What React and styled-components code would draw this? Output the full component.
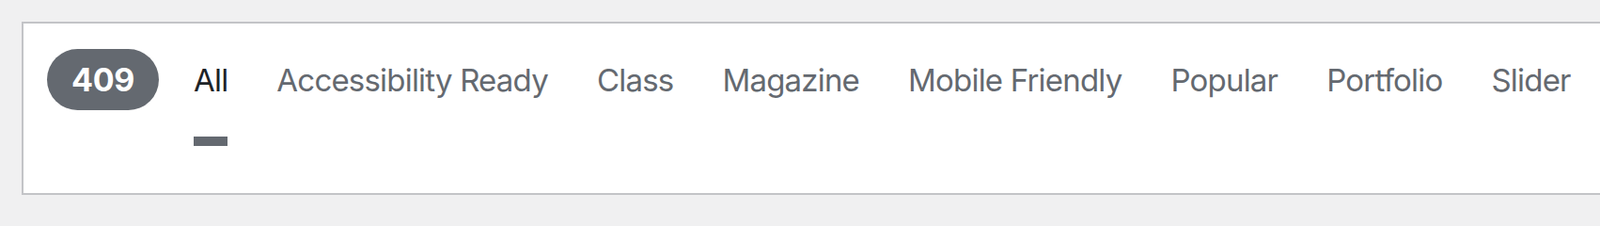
import React from 'react';
import styled, { createGlobalStyle } from 'styled-components';

const GlobalStyle = createGlobalStyle`
  html, body {
    margin: 0;
    padding: 0;
    background: #f0f0f1;
    overflow: hidden;
  }
  body {
    font-family: Inter, "Noto Sans", "Liberation Sans", sans-serif;
  }
`;

const Page = styled.div`
  padding: 23px 0 0 23px;
`;

const FilterBar = styled.div`
  display: flex;
  align-items: flex-start;
  box-sizing: border-box;
  height: 184px;
  width: calc(100% + 40px);
  padding-left: 25px;
  background: #fff;
  border: 2px solid #c3c4c7;
  box-shadow: 0 1px 1px rgba(0, 0, 0, 0.04);
`;

const CountBadge = styled.span`
  display: inline-flex;
  align-items: center;
  justify-content: center;
  box-sizing: border-box;
  height: 65px;
  min-width: 119px;
  margin-top: 27px;
  padding: 0 24px;
  border-radius: 33px;
  background: #646970;
  color: #fff;
  font-size: 34px;
  font-weight: 700;
  line-height: 1;
  letter-spacing: -0.3px;
`;

const Links = styled.ul`
  display: flex;
  gap: 52px;
  margin: 0 0 0 37px;
  padding: 0;
  list-style: none;
`;

const Item = styled.li`
  margin: 0;
`;

const Link = styled.a`
  display: block;
  padding: 40px 0;
  font-size: 33px;
  line-height: 40px;
  letter-spacing: -0.8px;
  color: ${({ $current }) => ($current ? '#1d2327' : '#646970')};
  text-decoration: none;
  border-bottom: 10px solid ${({ $current }) => ($current ? '#646970' : 'transparent')};
  white-space: nowrap;
`;

const filters = [
  'All',
  'Accessibility Ready',
  'Class',
  'Magazine',
  'Mobile Friendly',
  'Popular',
  'Portfolio',
  'Slider',
];

export default function App() {
  return (
    <Page>
      <GlobalStyle />
      <FilterBar>
        <CountBadge>409</CountBadge>
        <Links>
          {filters.map((name) => (
            <Item key={name}>
              <Link href="#" $current={name === 'All'}>
                {name}
              </Link>
            </Item>
          ))}
        </Links>
      </FilterBar>
    </Page>
  );
}
